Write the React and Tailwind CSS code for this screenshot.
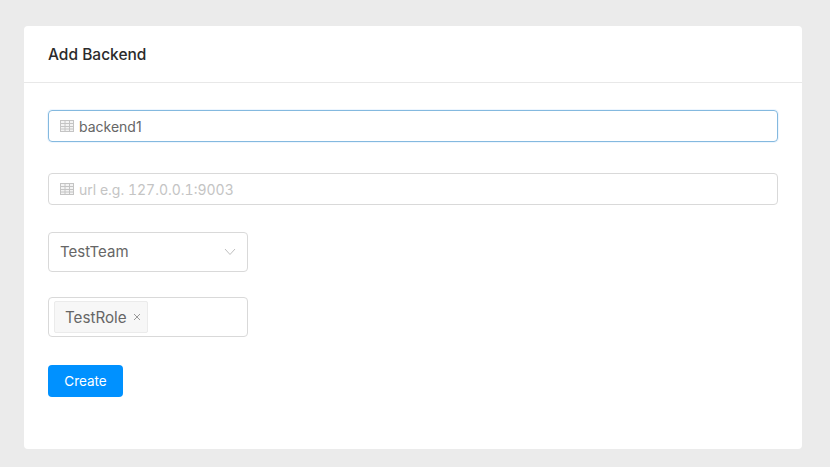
import React from 'react'

const TableIcon = () => (
  <svg width="14" height="12" viewBox="0 0 14 12" fill="none" stroke="#c4c4c4" strokeWidth="1" className="shrink-0">
    <rect x="0.5" y="0.5" width="13" height="11" fill="#f3f3f3" />
    <path d="M0.5 3.5H13.5M0.5 6.5H13.5M0.5 9H13.5M5 0.5V11.5M9.5 0.5V11.5" />
  </svg>
)

const App = () => {
  return (
    <div className="h-[467px] w-[830px] overflow-hidden bg-[#ebebeb] pt-[26px] pl-[24px] font-['Inter','Noto_Sans',sans-serif]">
      <div className="h-[423px] w-[778px] rounded-[4px] bg-white">
        <div className="flex h-[57px] items-center border-b border-[#e8e8e8] px-[24px] pt-[1px]">
          <h1 className="text-[15.5px] font-[450] leading-[22px] text-[#2b2b2b]">Add Backend</h1>
        </div>

        <div className="flex flex-col items-start px-[24px] pt-[27px]">
          <div className="flex h-[32px] w-[730px] items-center gap-[5px] rounded-[4px] border border-[#84b9df] px-[11px] shadow-[0_0_0_1px_rgba(24,144,255,0.08)]">
            <TableIcon />
            <input
              readOnly
              value="backend1"
              className="w-full bg-transparent text-[14px] text-[#666666] outline-none"
            />
          </div>

          <div className="mt-[31px] flex h-[32px] w-[730px] items-center gap-[5px] rounded-[4px] border border-[#d9d9d9] px-[11px]">
            <TableIcon />
            <input
              readOnly
              placeholder="url e.g. 127.0.0.1:9003"
              className="w-full bg-transparent text-[14px] tabular-nums text-[#666666] outline-none placeholder:text-[#c4c4c4]"
            />
          </div>

          <div className="mt-[27px] flex h-[40px] w-[200px] items-center justify-between rounded-[4px] border border-[#d9d9d9] px-[11px]">
            <span className="pt-[1px] text-[15px] text-[#666666]">TestTeam</span>
            <svg width="12" height="12" viewBox="0 0 12 12" fill="none" stroke="#bfbfbf" strokeWidth="1">
              <path d="M1 3L6 8.5L11 3" />
            </svg>
          </div>

          <div className="mt-[25px] flex h-[40px] w-[200px] items-center rounded-[4px] border border-[#d9d9d9] pl-[5px]">
            <div className="flex h-[32px] items-center gap-[6px] rounded-[2px] border border-[#ebebeb] bg-[#f7f7f7] pl-[10px] pr-[6px]">
              <span className="pt-[2px] text-[15.2px] text-[#666666]">TestRole</span>
              <svg width="8" height="8" viewBox="0 0 8 8" fill="none" stroke="#999999" strokeWidth="1">
                <path d="M1 1L7 7M7 1L1 7" />
              </svg>
            </div>
          </div>

          <button className="mt-[28px] h-[32px] w-[75px] rounded-[4px] bg-[#0091ff] text-[13.5px] text-white">
            Create
          </button>
        </div>
      </div>
    </div>
  )
}

export default App
